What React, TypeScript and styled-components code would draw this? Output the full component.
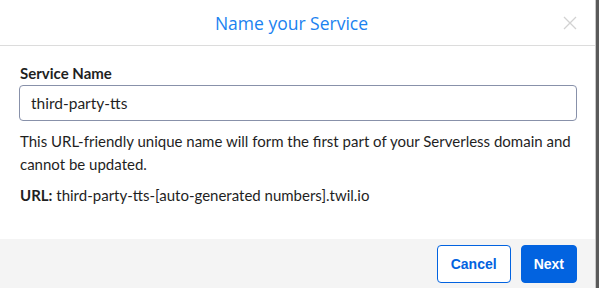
import React from "react";
import styled, { createGlobalStyle } from "styled-components";

const GlobalStyle = createGlobalStyle`
  html, body {
    margin: 0;
    padding: 0;
    background: #5a5a5a;
  }
  body {
    font-family: "Lato", "Liberation Sans", sans-serif;
  }
`;

const Modal = styled.div`
  width: 596px;
  height: 288px;
  background: #ffffff;
  border-right: 1px solid #c8c8c8;
  display: flex;
  flex-direction: column;
  box-sizing: border-box;
`;

const Header = styled.header`
  height: 46px;
  border-bottom: 1px solid #dcdcdc;
  box-sizing: border-box;
  display: flex;
  align-items: center;
  justify-content: center;
  position: relative;
`;

const Title = styled.h2`
  margin: 0 0 0 -12px;
  font-family: "Open Sans", sans-serif;
  font-weight: 400;
  font-size: 17.5px;
  color: #1a82f0;
`;

const Close = styled.button`
  position: absolute;
  right: 18px;
  top: 16px;
  width: 14px;
  height: 14px;
  padding: 0;
  border: none;
  background: none;
  cursor: pointer;
  display: flex;
`;

const Body = styled.div`
  flex: 1;
  padding: 17px 18px 0 19px;
  display: flex;
  flex-direction: column;
`;

const Label = styled.label`
  font-weight: 700;
  font-size: 15px;
  color: #1f1f1f;
  line-height: 20px;
  margin: 0 0 2px 1px;
`;

const Input = styled.input`
  height: 36px;
  box-sizing: border-box;
  border: 1px solid #8891aa;
  border-radius: 4px;
  padding: 0 11px;
  font-family: "Lato", sans-serif;
  font-size: 15.5px;
  color: #1f1f1f;
  outline: none;
`;

const Help = styled.p<{ $gap?: number }>`
  margin: ${(p) => p.$gap ?? 0}px 0 0 1px;
  font-size: 15px;
  line-height: 23px;
  color: #1f1f1f;
`;

const Strong = styled.strong`
  font-weight: 700;
`;

const Footer = styled.footer`
  height: 49px;
  background: #f4f4f4;
  display: flex;
  justify-content: flex-end;
  align-items: center;
  gap: 10px;
  padding: 0 18px;
`;

const Button = styled.button<{ $primary?: boolean }>`
  height: 38px;
  padding: 0 ${(p) => (p.$primary ? 12 : 13)}px;
  box-sizing: border-box;
  border-radius: 4px;
  border: 1px solid #0263e0;
  background: ${(p) => (p.$primary ? "#0263e0" : "#ffffff")};
  color: ${(p) => (p.$primary ? "#ffffff" : "#0263e0")};
  font-family: "Liberation Sans", Arial, sans-serif;
  font-weight: 700;
  font-size: 14px;
  cursor: pointer;
`;

function CloseIcon() {
  return (
    <svg width="14" height="14" viewBox="0 0 14 14">
      <path d="M1 1 L13 13 M13 1 L1 13" stroke="#d2d2d2" strokeWidth="1.3" fill="none" />
    </svg>
  );
}

export default function App() {
  return (
    <>
      <GlobalStyle />
      <Modal>
        <Header>
          <Title>Name your Service</Title>
          <Close aria-label="Close">
            <CloseIcon />
          </Close>
        </Header>
        <Body>
          <Label>Service Name</Label>
          <Input defaultValue="third-party-tts" />
          <Help $gap={9}>
            This URL-friendly unique name will form the first part of your Serverless domain and
            cannot be updated.
          </Help>
          <Help $gap={8}>
            <Strong>URL:</Strong> third-party-tts-[auto-generated numbers].twil.io
          </Help>
        </Body>
        <Footer>
          <Button>Cancel</Button>
          <Button $primary>Next</Button>
        </Footer>
      </Modal>
    </>
  );
}
